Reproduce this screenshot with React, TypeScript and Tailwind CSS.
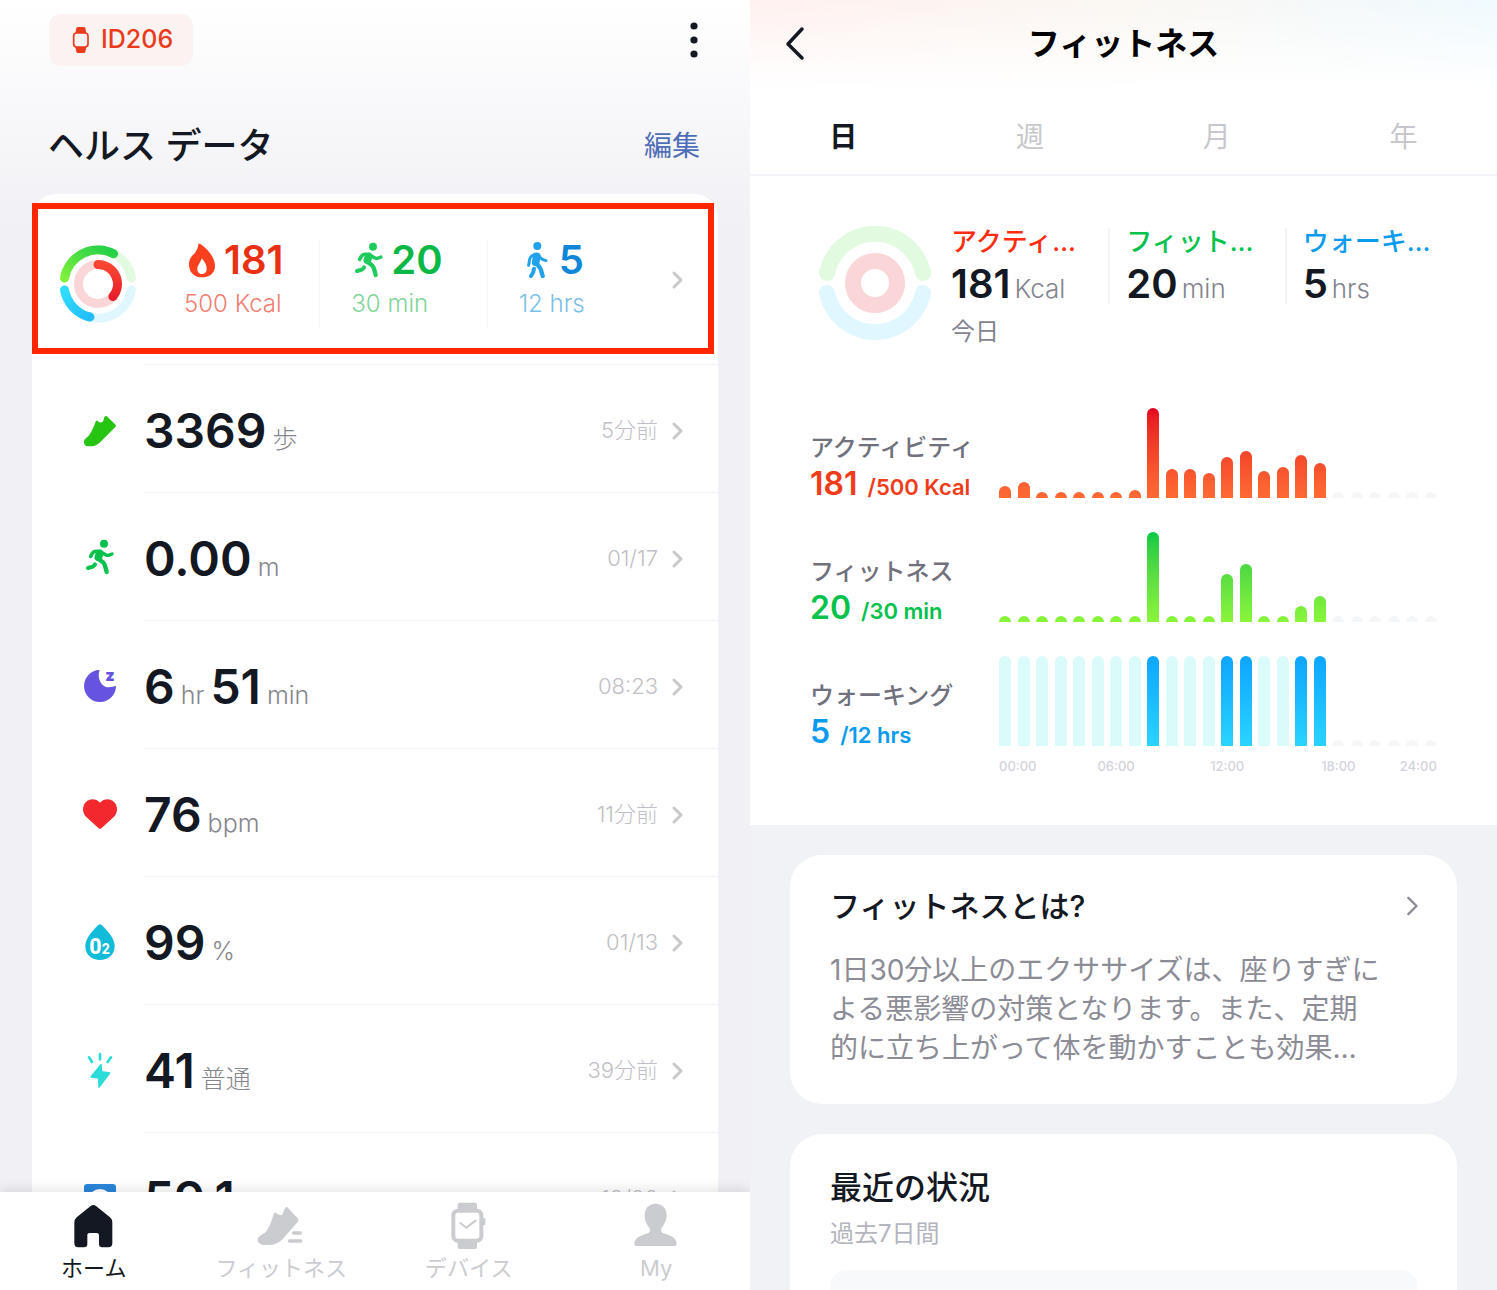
import React from 'react';

type IconProps = { className?: string };

interface Metric {
  id: string;
  icon: React.ReactNode;
  parts: { value: string; unit: string }[];
  time: string;
}

interface Chart {
  title: string;
  value: string;
  goal: string;
  textColor: string;
  barColor: string;
  emptyColor?: string;
  bars: number[];
}

function RunIcon({ className }: IconProps) {
  return (
    <svg viewBox="0 0 108 108" className={className} fill="none" stroke="currentColor" strokeLinecap="round" strokeLinejoin="round" aria-hidden="true">
      <circle cx="66" cy="14" r="12" fill="currentColor" stroke="none" />
      <path d="M53 44 L49 55" strokeWidth="23" />
      <path d="M56 37 H41 Q35 37 31 43 L26 52" strokeWidth="11" />
      <path d="M62 42 L72 48 Q75 50 79 49 L90 45" strokeWidth="10" />
      <path d="M48 58 L63 70 Q67 74 69 80 L74 99" strokeWidth="13" />
      <path d="M39 76 L37 79 Q34 83 29 84 L18 87" strokeWidth="12" />
    </svg>
  );
}

function WalkIcon({ className }: IconProps) {
  return (
    <svg viewBox="0 0 108 108" className={className} fill="none" stroke="currentColor" strokeLinecap="round" strokeLinejoin="round" aria-hidden="true">
      <circle cx="55" cy="12" r="12" fill="currentColor" stroke="none" />
      <path d="M53 43 L50 61" strokeWidth="23" />
      <path d="M47 37 L37 43 Q33 46 32 52 L29 70" strokeWidth="9" />
      <path d="M60 42 L67 50 Q70 53 81 56" strokeWidth="9" />
      <path d="M51 62 L62 76 Q66 82 67 88 L71 102" strokeWidth="13" />
      <path d="M45 80 L43 89 Q42 93 36 102" strokeWidth="12" />
    </svg>
  );
}

function FlameIcon({ className }: IconProps) {
  return (
    <svg viewBox="0 0 108 108" className={className} aria-hidden="true">
      <path d="M44 4 C62 12 93 42 93 72 C93 94 76 106 54 106 C32 106 15 92 15 68 C15 52 21 44 30 36 C36 30 41 22 44 4Z" fill="#fb4020" />
      <path d="M53 49 C62 60 68 68 68 80 C68 91 61 96 54 96 C46 96 40 91 40 80 C40 70 50 62 53 49Z" fill="#fff" />
    </svg>
  );
}

function ShoeIcon({ className }: IconProps) {
  return (
    <svg viewBox="0 0 120 120" className={className} aria-hidden="true">
      <path d="M12 98 C12 90 22 86 28 78 C35 67 42 52 47 38 Q50 32 54 37 Q60 43 69 38 L73 24 Q76 18 82 23 L107 47 Q109 50 106 54 L64 96 C56 104 48 111 36 112 H24 C16 112 12 106 12 98Z" fill="#28c414" />
    </svg>
  );
}

function SleepIcon({ className }: IconProps) {
  return (
    <svg viewBox="0 0 120 120" className={className} fill="#6653e0" aria-hidden="true">
      <path d="M59 15 C52 32 58 58 76 65 C88 69 100 64 108 63 A48 48 0 1 1 59 15Z" />
      <text x="76" y="47" fontSize="48" fontWeight="900" fontFamily="Inter, sans-serif">z</text>
    </svg>
  );
}

function HeartIcon({ className }: IconProps) {
  return (
    <svg viewBox="0 0 120 120" className={className} aria-hidden="true">
      <path d="M56 106 L18 71 C6 59 6 38 18 27 C30 15 49 17 60 29 C71 17 90 15 102 27 C114 38 114 59 102 71 L64 106 Q60 109 56 106Z" fill="#f2282d" />
    </svg>
  );
}

function OxygenIcon({ className }: IconProps) {
  return (
    <svg viewBox="0 0 120 120" className={className} fontFamily="Roboto, sans-serif" fontWeight="800" aria-hidden="true">
      <path d="M54 13 Q60 7 66 13 C84 31 104 52 104 76 C104 102 84 117 60 117 C36 117 16 102 16 76 C16 52 36 31 54 13Z" fill="#12bcd8" />
      <text x="28" y="99" fontSize="64" fill="#fff">0</text>
      <text x="65" y="99" fontSize="42" fill="#fff">2</text>
    </svg>
  );
}

function StressIcon({ className }: IconProps) {
  return (
    <svg viewBox="0 0 120 120" className={className} fill="none" stroke="#2bdcd8" strokeLinecap="round" strokeLinejoin="round" aria-hidden="true">
      <path d="M27 25 L36 39 M60 15 V31 M93 25 L83 39" strokeWidth="8" />
      <path d="M63 46 L33 84 L56 87 L57 115 L89 72 L65 68Z" fill="#2bdcd8" strokeWidth="4" />
    </svg>
  );
}

function ScaleIcon({ className }: IconProps) {
  return (
    <svg viewBox="0 0 120 120" className={className} aria-hidden="true">
      <rect x="12" y="21" width="96" height="94" rx="10" fill="#2a86db" />
      <circle cx="60" cy="72" r="36" fill="#fff" />
    </svg>
  );
}

function WatchIcon({ className }: IconProps) {
  return (
    <svg viewBox="0 0 72 84" className={className} fill="#ea3b1c" aria-hidden="true">
      <path d="M27 3 H44 Q48 3 49 7 L52 22 H19 L22 7 Q23 3 27 3Z" />
      <path d="M19 63 H52 L49 77 Q48 81 44 81 H27 Q23 81 22 77Z" />
      <rect x="14" y="21" width="43" height="42" rx="9" fill="#fbf1f0" stroke="#ea3b1c" strokeWidth="5" />
    </svg>
  );
}

function HomeNavIcon({ className }: IconProps) {
  return (
    <svg viewBox="0 0 144 144" className={className} fill="currentColor" aria-hidden="true">
      <path d="M13 62 Q13 52 20 46 L62 12 Q70 6 78 12 L120 46 Q127 52 127 62 V124 Q127 136 115 136 H97 Q87 136 87 126 V100 Q87 93 80 93 H60 Q52 93 52 100 V126 Q52 136 42 136 H25 Q13 136 13 124Z" />
    </svg>
  );
}

function FitnessNavIcon({ className }: IconProps) {
  return (
    <svg viewBox="0 0 144 144" className={className} fill="currentColor" aria-hidden="true">
      <path d="M2 112 C2 102 18 98 26 90 C38 76 44 56 50 36 Q52 30 57 33 Q66 42 76 38 L84 18 Q89 12 94 19 L123 50 Q126 54 122 60 L78 110 C66 122 54 128 38 129 H18 C8 128 2 122 2 112Z" />
      <path d="M110 93 H130 M98 117 H131" stroke="currentColor" strokeWidth="11" strokeLinecap="round" />
    </svg>
  );
}

function DeviceNavIcon({ className }: IconProps) {
  return (
    <svg viewBox="0 0 144 144" className={className} fill="currentColor" aria-hidden="true">
      <rect x="38" y="2" width="58" height="34" rx="6" />
      <rect x="38" y="106" width="58" height="35" rx="6" />
      <rect x="112" y="48" width="9" height="22" rx="4" />
      <rect x="25" y="26" width="84" height="90" rx="14" fill="#fff" stroke="currentColor" strokeWidth="12" />
      <path d="M46 63 L64 77 L92 56" fill="none" stroke="currentColor" strokeWidth="6" strokeLinecap="round" />
    </svg>
  );
}

function MyNavIcon({ className }: IconProps) {
  return (
    <svg viewBox="0 0 144 144" className={className} fill="currentColor" aria-hidden="true">
      <path d="M70 5 C92 5 104 20 104 40 C103 58 96 68 90 76 C86 83 86 90 94 94 C116 100 134 108 134 126 Q134 132 128 132 H13 Q7 132 7 126 C7 108 26 100 48 94 C56 90 55 83 51 76 C45 68 38 58 38 40 C38 20 50 5 70 5Z" />
    </svg>
  );
}

function Chevron({ className }: IconProps) {
  return (
    <svg viewBox="0 0 24 24" className={className} fill="none" stroke="currentColor" strokeLinecap="round" strokeLinejoin="round" aria-hidden="true">
      <path d="M8 5 L15 12 L8 19" />
    </svg>
  );
}

// Progress rings of the home card, all three partly filled
function ActivityRings() {
  return (
    <svg viewBox="-40 -40 80 80" className="size-20 shrink-0" fill="none" strokeLinecap="round" strokeWidth="9" aria-hidden="true">
      <defs>
        <linearGradient id="ring-green" x1="0" y1="1" x2="1" y2="0">
          <stop offset="0" stopColor="#7ff03c" />
          <stop offset="1" stopColor="#22cf48" />
        </linearGradient>
        <linearGradient id="ring-red" x1="0" y1="0" x2="0" y2="1">
          <stop offset="0" stopColor="#fa4632" />
          <stop offset="1" stopColor="#e8202c" />
        </linearGradient>
        <linearGradient id="ring-blue" x1="0" y1="0" x2="1" y2="1">
          <stop offset="0" stopColor="#30dcff" />
          <stop offset="1" stopColor="#22bdf8" />
        </linearGradient>
      </defs>
      <path d="M-33.5 -6 A34 34 0 0 1 33.5 -6" stroke="#e1fae0" />
      <path d="M-33.5 6 A34 34 0 0 0 33.5 6" stroke="#e0f7ff" />
      <circle r="19.5" stroke="#fad6d8" />
      <path d="M-33.5 -6 A34 34 0 0 1 15.5 -30.3" stroke="url(#ring-green)" />
      <path d="M-33.5 6 A34 34 0 0 0 -8 33" stroke="url(#ring-blue)" />
      <path d="M0 -19.5 A19.5 19.5 0 0 1 14.9 12.5" stroke="url(#ring-red)" />
    </svg>
  );
}

function EmptyRings() {
  return (
    <svg viewBox="-57 -57 114 114" className="size-[114px] shrink-0" fill="none" strokeLinecap="round" strokeWidth="16" aria-hidden="true">
      <path d="M-48 -10 A49 49 0 0 1 48 -10" stroke="#e1fae0" />
      <path d="M-48 10 A49 49 0 0 0 48 10" stroke="#e0f7ff" />
      <circle r="22" stroke="#fad6d8" />
    </svg>
  );
}

const homeStats = [
  { id: 'activity', icon: <FlameIcon className="size-9" />, value: '181', goal: '500 Kcal', color: 'text-[#ea3014]', goalColor: 'text-[#f07f74]' },
  { id: 'fitness', icon: <RunIcon className="size-9 text-[#1fcb5c]" />, value: '20', goal: '30 min', color: 'text-[#0cb845]', goalColor: 'text-[#7fd59a]' },
  { id: 'walking', icon: <WalkIcon className="size-9 text-[#22a2ec]" />, value: '5', goal: '12 hrs', color: 'text-[#0f86d8]', goalColor: 'text-[#7cbfe8]' },
];

const metrics: Metric[] = [
  { id: 'steps', icon: <ShoeIcon className="size-10" />, parts: [{ value: '3369', unit: '歩' }], time: '5分前' },
  { id: 'distance', icon: <RunIcon className="size-9 text-[#06c24c]" />, parts: [{ value: '0.00', unit: 'm' }], time: '01/17' },
  { id: 'sleep', icon: <SleepIcon className="size-10" />, parts: [{ value: '6', unit: 'hr' }, { value: '51', unit: 'min' }], time: '08:23' },
  { id: 'heart', icon: <HeartIcon className="size-10" />, parts: [{ value: '76', unit: 'bpm' }], time: '11分前' },
  { id: 'oxygen', icon: <OxygenIcon className="size-10" />, parts: [{ value: '99', unit: '%' }], time: '01/13' },
  { id: 'stress', icon: <StressIcon className="size-10" />, parts: [{ value: '41', unit: '普通' }], time: '39分前' },
  { id: 'weight', icon: <ScaleIcon className="size-10" />, parts: [{ value: '59.1', unit: 'kg' }], time: '12/20' },
];

const navItems = [
  { label: 'ホーム', icon: <HomeNavIcon className="size-12" />, active: true },
  { label: 'フィットネス', icon: <FitnessNavIcon className="size-12" />, active: false },
  { label: 'デバイス', icon: <DeviceNavIcon className="size-12" />, active: false },
  { label: 'My', icon: <MyNavIcon className="size-12" />, active: false },
];

const periods = ['日', '週', '月', '年'];

const todayStats = [
  { label: 'アクティ…', value: '181', unit: 'Kcal', color: 'text-[#ff2d10]' },
  { label: 'フィット…', value: '20', unit: 'min', color: 'text-[#06c24c]' },
  { label: 'ウォーキ…', value: '5', unit: 'hrs', color: 'text-[#0a9bee]' },
];

// One bar height per hour; hours still to come are not listed
const charts: Chart[] = [
  {
    title: 'アクティビティ',
    value: '181',
    goal: '/500 Kcal',
    textColor: 'text-[#f03c1a]',
    barColor: 'from-[#ff6a35] to-[#e60020]',
    bars: [12, 16, 6, 6, 6, 6, 6, 8, 90, 29, 29, 25, 41, 47, 27, 31, 43, 35],
  },
  {
    title: 'フィットネス',
    value: '20',
    goal: '/30 min',
    textColor: 'text-[#06c24c]',
    barColor: 'from-[#8af53a] to-[#00c846]',
    bars: [6, 6, 6, 6, 6, 6, 6, 6, 90, 6, 6, 6, 48, 58, 6, 6, 16, 26],
  },
  {
    title: 'ウォーキング',
    value: '5',
    goal: '/12 hrs',
    textColor: 'text-[#0a9bee]',
    barColor: 'from-[#2bd3ff] to-[#0fa5ff]',
    emptyColor: 'bg-[#dbfbfb]',
    bars: [0, 0, 0, 0, 0, 0, 0, 0, 90, 0, 0, 0, 90, 90, 0, 0, 90, 90],
  },
];

const hours = Array.from({ length: 24 }, (_, hour) => hour);

const axisLabels: Record<number, string> = { 0: '00:00', 6: '06:00', 12: '12:00', 18: '18:00', 23: '24:00' };

function HourBar({ chart, hour }: { chart: Chart; hour: number }) {
  const height = chart.bars[hour];

  if (height === undefined) {
    return <div className="w-3 h-1.5 rounded-t-md bg-[#f5f6f8]" />;
  }
  if (height === 0) {
    return <div className={`w-3 h-full rounded-t-md ${chart.emptyColor}`} />;
  }
  return (
    <div
      className={`w-3 rounded-t-md bg-linear-to-t bg-[length:100%_90px] bg-bottom bg-no-repeat ${chart.barColor}`}
      style={{ height }}
    />
  );
}

function HomeScreen() {
  return (
    <section className="flex flex-col min-w-0 h-full overflow-hidden bg-[#f0f0f5]">
      <div className="flex-1 min-h-0 overflow-hidden bg-linear-to-b from-white to-[#f0f0f5] bg-[length:100%_240px] bg-no-repeat">
        <header className="flex items-center justify-between px-[49px] pt-3.5">
          <button type="button" className="flex items-center gap-2 h-13 px-5 rounded-xl bg-[#fbf3f2] text-[25px] font-medium text-[#ea3b1c]">
            <WatchIcon className="w-6 h-7" />
            ID206
          </button>
          <button type="button" aria-label="メニュー">
            <svg viewBox="0 0 14 40" className="w-3.5 h-10" fill="#141823" aria-hidden="true">
              <circle cx="7" cy="6" r="3.6" />
              <circle cx="7" cy="20" r="3.6" />
              <circle cx="7" cy="34" r="3.6" />
            </svg>
          </button>
        </header>

        <div className="flex items-center justify-between pl-12 pr-[50px] mt-14 mb-6">
          <h1 className="text-4xl leading-12 font-medium text-[#141823]">ヘルス データ</h1>
          <a href="#edit" className="text-[28px] leading-12 text-[#4f6eb8]">編集</a>
        </div>

        <div className="mx-8 pt-[9px] rounded-t-3xl bg-white">
          <div className="pr-1">
            <button type="button" className="flex items-center w-full h-[151px] pt-2.5 pl-5 pr-4.5 border-6 border-[#ff2600] text-left">
              <ActivityRings />
              <span className="flex-1 grid grid-cols-3 ml-3.5 mr-3">
                {homeStats.map((stat, index) => (
                  <span key={stat.id} className={`block h-22 ${index > 0 ? 'pl-[31px] border-l border-[#f5f5f7]' : 'pl-8'}`}>
                    <span className="flex items-center gap-1 h-10">
                      {stat.icon}
                      <span className={`text-[40px] leading-10 font-semibold ${stat.color}`}>{stat.value}</span>
                    </span>
                    <span className={`block mt-2 text-2xl leading-8 font-light ${stat.goalColor}`}>{stat.goal}</span>
                  </span>
                ))}
              </span>
              <Chevron className="size-6 mb-2 shrink-0 stroke-3 text-[#c9c9cc]" />
            </button>
          </div>

          <ul className="mt-2.5">
            {metrics.map((metric) => (
              <li key={metric.id} className="flex items-center pl-12">
                <span className="flex justify-center w-10 mr-6 pt-0.5">{metric.icon}</span>
                <a href={`#${metric.id}`} className="flex-1 flex items-center justify-between h-32 pr-7 pt-1 border-t border-[#f3f3f6]">
                  <span className="flex items-baseline gap-1.5">
                    {metric.parts.map((part) => (
                      <React.Fragment key={part.unit}>
                        <span className="text-5xl leading-14 font-semibold text-[#141823]">{part.value}</span>
                        <span className="text-[25px] font-light text-[#85868c]">{part.unit}</span>
                      </React.Fragment>
                    ))}
                  </span>
                  <span className="flex items-center gap-2 text-[22px] font-light text-[#bfc0c5]">
                    {metric.time}
                    <Chevron className="size-6 stroke-3 text-[#c9c9cc]" />
                  </span>
                </a>
              </li>
            ))}
          </ul>
        </div>
      </div>

      <nav className="relative grid grid-cols-4 pt-2.5 pb-2 bg-white shadow-[0_-2px_12px_rgba(0,0,0,0.12)]">
        {navItems.map((item) => (
          <a
            key={item.label}
            href={`#${item.label}`}
            className={`flex flex-col items-center gap-1 text-[22px] leading-7 ${item.active ? 'text-[#141823]' : 'text-[#cbccd0]'}`}
          >
            {item.icon}
            {item.label}
          </a>
        ))}
      </nav>
    </section>
  );
}

function FitnessScreen() {
  return (
    <section className="min-w-0 h-full overflow-hidden bg-[#f1f2f6]">
      <div className="pb-[49px] bg-white">
        <header className="bg-linear-to-r from-[#fff1ef] via-[#fbf7f2] to-[#effaff]">
          <div className="grid grid-cols-[1fr_auto_1fr] items-center h-22 px-7.5 bg-linear-to-b from-transparent to-white">
            <button type="button" aria-label="戻る" className="justify-self-start">
              <svg viewBox="0 0 30 40" className="w-7.5 h-10" fill="none" stroke="#141823" strokeWidth="3.5" strokeLinecap="round" strokeLinejoin="round" aria-hidden="true">
                <path d="M22 5 L8 20 L22 34" />
              </svg>
            </button>
            <h2 className="text-[32px] leading-12 font-bold text-black">フィットネス</h2>
          </div>
        </header>

        <div role="tablist" className="grid grid-cols-4 h-22 pt-3 border-b-2 border-[#f2f3f7]">
          {periods.map((period, index) => (
            <button
              key={period}
              type="button"
              role="tab"
              aria-selected={index === 0}
              className={`text-[28px] ${index === 0 ? 'font-bold text-[#141823]' : 'text-[#c8c8cc]'}`}
            >
              {period}
            </button>
          ))}
        </div>

        <div className="flex pl-17 pr-9 pt-[50px]">
          <EmptyRings />
          <div className="flex-1 pt-0.5">
            <div className="grid grid-cols-3">
              {todayStats.map((stat, index) => (
                <div key={stat.label} className={index > 0 ? 'pl-4 border-l-2 border-[#f2f3f6]' : 'pl-[19px]'}>
                  <p className={`text-[26px] leading-7 font-medium whitespace-nowrap ${stat.color}`}>{stat.label}</p>
                  <p className="mt-2 text-[40px] leading-10 font-semibold whitespace-nowrap text-[#141823]">
                    {stat.value}
                    <span className="ml-1 text-[26px] leading-none font-light text-[#83848e]">{stat.unit}</span>
                  </p>
                </div>
              ))}
            </div>
            <p className="mt-3 pl-[19px] text-2xl leading-8 text-[#83848e]">今日</p>
          </div>
        </div>

        <div className="flex flex-col gap-[34px] mt-15 px-15">
          {charts.map((chart) => (
            <div key={chart.title} className="flex items-end">
              <div className="w-[189px] shrink-0 whitespace-nowrap">
                <h3 className="text-2xl leading-8 font-medium text-[#70717c]">{chart.title}</h3>
                <p className={`mt-1.5 text-[32px] leading-7 font-semibold ${chart.textColor}`}>
                  {chart.value}
                  <span className="ml-2.5 text-[22px] leading-none">{chart.goal}</span>
                </p>
              </div>
              <div className="flex-1 flex items-end justify-between h-[90px]">
                {hours.map((hour) => (
                  <HourBar key={hour} chart={chart} hour={hour} />
                ))}
              </div>
            </div>
          ))}
        </div>

        <div className="flex justify-between mt-2.5 pl-[249px] pr-15 text-[13px] leading-5 font-medium text-[#d3d3dc]">
          {hours.map((hour) => (
            <span
              key={hour}
              className={`flex w-3 whitespace-nowrap ${hour === 0 ? 'justify-start' : hour === 23 ? 'justify-end' : 'justify-center'}`}
            >
              {axisLabels[hour]}
            </span>
          ))}
        </div>
      </div>

      <article className="mx-10 mt-7.5 px-10 pt-[33px] pb-9 rounded-4xl bg-white">
        <a href="#about-fitness" className="flex items-center justify-between -mr-2.5">
          <h3 className="text-[30px] leading-9 font-medium text-[#141823]">フィットネスとは?</h3>
          <Chevron className="size-7 stroke-2 text-[#8b8c94]" />
        </a>
        <p className="mt-[27px] pr-8 text-[28px] leading-[39px] text-[#8b8c96]">
          1日30分以上のエクササイズは、座りすぎによる悪影響の対策となります。また、定期的に立ち上がって体を動かすことも効果…
        </p>
      </article>

      <article className="mx-10 mt-7.5 px-10 pt-8 rounded-t-4xl bg-white">
        <h3 className="text-[32px] leading-11 font-medium text-[#141823]">最近の状況</h3>
        <p className="mt-2 text-2xl leading-8 text-[#b4b5be]">過去7日間</p>
        <div className="h-40 mt-5 rounded-2xl bg-[#f8f9fb]" />
      </article>
    </section>
  );
}

export default function App() {
  return (
    <main className="grid grid-cols-[750fr_747fr] grid-rows-[minmax(0,1fr)] h-screen overflow-hidden font-[Inter,'Noto_Sans_CJK_JP',sans-serif]">
      <HomeScreen />
      <FitnessScreen />
    </main>
  );
}
